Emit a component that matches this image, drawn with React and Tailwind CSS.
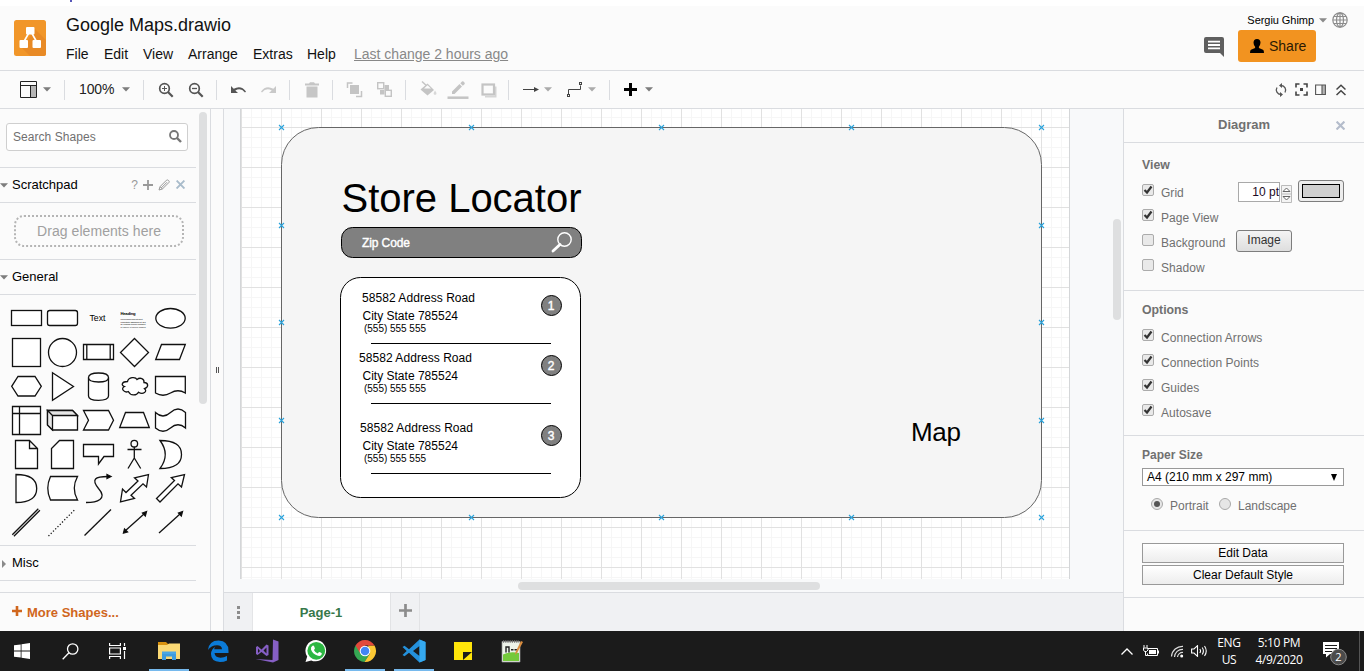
import React from "react";

/* ---------- small helpers ---------- */

function Caret({ className = "", color = "#7d7d7d" }) {
  return (
    <svg className={"block shrink-0 " + className} width="8" height="5" viewBox="0 0 8 5">
      <path d="M0 0.3H8L4 4.6Z" fill={color} />
    </svg>
  );
}

function Group({ className = "", children }) {
  return <div className={"flex h-5 shrink-0 items-center border-r border-[#dadce0] " + className}>{children}</div>;
}

function Tool({ children, className = "" }) {
  return (
    <svg className={"block h-5 w-[30px] shrink-0 " + className} viewBox="0 0 30 20" fill="none">
      {children}
    </svg>
  );
}

/* ---------- header ---------- */

function Header() {
  return (
    <header className="flex h-[65px] shrink-0 border-b border-[#dadce0] bg-[#fbfbfb]">
      <svg className="ml-[14px] mt-[14px] block h-9 w-8 shrink-0" viewBox="0 0 32 36">
        <rect width="32" height="36" rx="2.5" fill="#f19629" />
        <path d="M20 8L32 20V33.5Q32 36 29.500 36H16L7 27L14 20Z" fill="#e88a26" />
        <path d="M14.500 13.500L10 21.500M18 13.500L22.500 21.500" stroke="#fff" strokeWidth="1.600" />
        <rect x="12" y="7" width="8.500" height="7.500" rx="1" fill="#fff" />
        <rect x="5.500" y="20" width="8.500" height="8" rx="1" fill="#fff" />
        <rect x="18.500" y="20" width="8.500" height="8" rx="1" fill="#fff" />
      </svg>
      <div className="ml-5 flex flex-col">
        <div className="mt-[7px] text-[18px] leading-6 text-[#111]">Google Maps.drawio</div>
        <nav className="mt-[7px] flex text-[14px] leading-5 text-[#111]">
          <span className="w-[38px]">File</span>
          <span className="w-[39px]">Edit</span>
          <span className="w-[45px]">View</span>
          <span className="w-[65px]">Arrange</span>
          <span className="w-[54px]">Extras</span>
          <span className="w-[47px]">Help</span>
          <span className="text-[#888] underline">Last change 2 hours ago</span>
        </nav>
      </div>
      <div className="ml-auto flex flex-col">
        <div className="mt-[5px] flex h-[18px] items-center pr-4 text-[11px] text-black">
          <span className="ml-auto tracking-[-0.05px]">Sergiu Ghimp</span>
          <Caret className="ml-[5px]" color="#8a8a8a" />
          <svg className="ml-[5px] block h-4 w-4" viewBox="0 0 16 16" fill="none" stroke="#8c8c8c" strokeWidth="1.200">
            <circle cx="8" cy="8" r="7.200" />
            <ellipse cx="8" cy="8" rx="3.500" ry="7.200" />
            <path d="M8 1V15M1 8H15M2 4.500H14M2 11.500H14" />
          </svg>
        </div>
        <div className="mt-px flex items-center pr-12">
          <svg className="mt-[2px] block h-5 w-5" viewBox="0 0 20 20">
            <path d="M2 0H18Q20 0 20 2V20L16 16H2Q0 16 0 14V2Q0 0 2 0Z" fill="#5f5f5f" />
            <path d="M4 4.700H16M4 8H16M4 11.300H16" stroke="#fff" strokeWidth="1.800" />
          </svg>
          <button className="ml-[14px] flex h-8 w-[78px] items-center rounded-[3px] bg-[#f29320] pl-3 text-[14px] text-[#2a1a04]">
            <svg className="mr-[5px] block h-[14px] w-[14px]" viewBox="0 0 14 14">
              <path d="M7 0Q10.500 0 10.500 3.800Q10.300 6.500 8.900 7.700V9L13 10.800Q14 11.400 14 14H0Q0 11.400 1 10.800L5.100 9V7.700Q3.700 6.500 3.500 3.800Q3.500 0 7 0Z" fill="#000" />
            </svg>
            Share
          </button>
        </div>
      </div>
    </header>
  );
}

/* ---------- toolbar ---------- */

function Toolbar() {
  return (
    <div className="flex h-[38px] shrink-0 items-center border-b border-[#dadce0] bg-[#fbfbfb]">
      <Group className="w-[65px] pl-5">
        <svg className="block h-[17px] w-[17px]" viewBox="0 0 17 17">
          <rect x="10.500" y="5" width="6" height="11" fill="#b5b5b5" />
          <path d="M0.500 0.500H16.500V16.500H0.500ZM0.500 4.500H16.500M10.500 4.500V16.500" fill="none" stroke="#222" />
        </svg>
        <Caret className="ml-[6px]" />
      </Group>
      <Group className="w-[79px] pl-[14px] text-[14px] text-[#222]">
        <span className="w-9 tracking-[-0.1px]">100%</span>
        <Caret className="ml-[7px]" />
      </Group>
      <Group className="w-[73px] pl-[7px]">
        <Tool>
          <circle cx="13.500" cy="8.500" r="4.800" stroke="#555" strokeWidth="1.700" />
          <path d="M17 12L21.700 16.700" stroke="#555" strokeWidth="2.200" />
          <path d="M11 8.500H16M13.500 6V11" stroke="#555" />
        </Tool>
        <Tool>
          <circle cx="13.500" cy="8.500" r="4.800" stroke="#555" strokeWidth="1.700" />
          <path d="M17 12L21.700 16.700" stroke="#555" strokeWidth="2.200" />
          <path d="M11 8.500H16" stroke="#555" strokeWidth="1.300" />
        </Tool>
      </Group>
      <Group className="w-[73px] pl-[6px]">
        <Tool>
          <path d="M8 6V13H15L12.300 10.400Q18 7.500 22 12.500L23 11.500Q18 4.500 10.700 8.700Z" fill="#555" />
        </Tool>
        <Tool>
          <path d="M23 6V13H16L18.700 10.400Q13 7.500 9 12.500L8 11.500Q13 4.500 20.300 8.700Z" fill="#c9c9c9" />
        </Tool>
      </Group>
      <Group className="w-[43px] pl-[7px]">
        <Tool>
          <path d="M8 3.500H12L13 2.300H17L18 3.500H22V5.500H8ZM9.500 6.500H20.500V17.500H9.500Z" fill="#c6c6c6" />
        </Tool>
      </Group>
      <Group className="w-[73px] pl-[6px]">
        <Tool>
          <path d="M13.500 3H8.500V8M17 16.500H22.500V11" stroke="#c4c4c4" strokeWidth="1.500" />
          <rect x="11" y="5" width="9" height="9" fill="#c4c4c4" />
        </Tool>
        <Tool>
          <path d="M15.500 5H20V10H15.500V14.500H11V10H15.500Z" fill="#c4c4c4" />
          <rect x="8.700" y="2.700" width="6" height="6" fill="#fbfbfb" stroke="#c4c4c4" strokeWidth="1.400" />
          <rect x="16.300" y="10.300" width="6" height="6" fill="#fbfbfb" stroke="#c4c4c4" strokeWidth="1.400" />
        </Tool>
      </Group>
      <Group className="w-[103px] pl-[7px]">
        <Tool>
          <path d="M9 1.500L18 10" stroke="#c4c4c4" strokeWidth="1.400" />
          <path d="M14.500 3.500L21 10L14.500 15.500L7.500 9.500Z" fill="#c4c4c4" />
          <path d="M11 8.500L14.500 5.300L18 8.500Z" fill="#fbfbfb" />
          <path d="M22 10.500Q24 13 23.300 14.200Q22 15.500 20.800 14.200Q20.200 13 22 10.500Z" fill="#d8d8d8" />
        </Tool>
        <Tool>
          <path d="M4.500 17.700H25.500" stroke="#c4c4c4" strokeWidth="2.500" />
          <path d="M9 11.500L16.500 4L19 6.500L11.500 14H9ZM17.300 3.200L19 1.500Q20 0.900 21.300 2.200Q22.300 3.500 21.500 4.200L19.800 5.800Z" fill="#c4c4c4" />
        </Tool>
        <Tool>
          <path d="M22 6.500H23.500V17.500H12V16H22Z" fill="#d5d5d5" />
          <rect x="9.500" y="4.500" width="11.500" height="10" stroke="#c4c4c4" strokeWidth="2.200" />
        </Tool>
      </Group>
      <Group className="w-[101px] pl-[6px]">
        <Tool>
          <path d="M8 9.500H20" stroke="#444" />
          <path d="M19 7L24 9.500L19 12Z" fill="#444" />
        </Tool>
        <Caret color="#ababab" className="-ml-px" />
        <Tool className="ml-[7px]">
          <path d="M9.500 14V9.500H21.500V5.500" stroke="#444" />
          <rect x="8.500" y="14.500" width="2" height="2" stroke="#444" />
          <rect x="20.500" y="2.500" width="2" height="2" stroke="#444" />
        </Tool>
        <Caret color="#ababab" className="-ml-px" />
      </Group>
      <div className="flex h-5 items-center pl-[14px]">
        <svg className="block h-[13px] w-[13px]" viewBox="0 0 13 13">
          <path d="M6.500 0V13M0 6.500H13" stroke="#000" strokeWidth="3" />
        </svg>
        <Caret className="ml-2" />
      </div>
      <div className="ml-auto flex items-center gap-[7px] pr-[18px]">
        <svg className="block h-[14px] w-[14px]" viewBox="0 0 14 14" fill="none" stroke="#555" strokeWidth="1.300">
          <path d="M7 2.500A4.600 4.600 0 0 1 11 9.500M7 11.500A4.600 4.600 0 0 1 3 4.500" />
          <path d="M8 0L5 2.500L8 5ZM6 9L9 11.500L6 14Z" fill="#555" stroke="none" />
        </svg>
        <svg className="block h-[13px] w-[13px]" viewBox="0 0 13 13" fill="none" stroke="#444" strokeWidth="1.600">
          <path d="M1 4.500V1H4.500M8.500 1H12V4.500M12 8.500V12H8.500M4.500 12H1V8.500" />
          <rect x="5" y="5" width="3" height="3" fill="#444" stroke="none" />
        </svg>
        <svg className="block h-[13px] w-[11px]" viewBox="0 0 11 13">
          <rect x="7" y="2" width="3" height="9" fill="#b5b5b5" />
          <path d="M0.600 2H10.400V11.500H0.600ZM7 2V11.500" fill="none" stroke="#555" strokeWidth="1.100" />
        </svg>
        <svg className="ml-[3px] block h-[12px] w-[10px]" viewBox="0 0 10 12" fill="none" stroke="#444" strokeWidth="1.500">
          <path d="M0.500 5.500L5 1.200L9.500 5.500M0.500 11L5 6.700L9.500 11" />
        </svg>
      </div>
    </div>
  );
}

/* ---------- shape palette ---------- */

const SHAPES = [
  <rect x="3.5" y="9.500" width="30" height="15" />,
  <rect x="3.5" y="9.500" width="30" height="15" rx="2.200" />,
  <text x="9.500" y="20" fontSize="9" fill="#000" stroke="none" textLength="16" lengthAdjust="spacingAndGlyphs">Text</text>,
  <g stroke="none" fill="#000">
    <text x="4.500" y="14" fontSize="4.200" fontWeight="bold" textLength="15">Heading</text>
    <text x="4.500" y="19" fontSize="2" textLength="22">Lorem ipsum dolor sit amet</text>
    <text x="4.500" y="21.500" fontSize="2" textLength="25">consectetur adipisicing elit, sed</text>
    <text x="4.500" y="24" fontSize="2" textLength="25">do eiusmod tempor incididunt</text>
    <text x="4.500" y="26.500" fontSize="2" textLength="25">ut labore et dolore magna</text>
  </g>,
  <ellipse cx="18.500" cy="17.300" rx="14.700" ry="9.800" />,
  <rect x="4.500" y="3.500" width="28" height="28" />,
  <circle cx="18.500" cy="17.500" r="14" />,
  <path d="M3.500 9.500H33.500V24.500H3.500ZM6.800 9.500V24.500M30.200 9.500V24.500" />,
  <path d="M18.500 3.500L32.500 17.500L18.500 31.500L4.500 17.500Z" />,
  <path d="M9.500 9.500H33.300L27.500 24.500H3.700Z" />,
  <path d="M10 7.500H27L33.300 17.300L27 27H10L3.700 17.300Z" />,
  <path d="M8.500 3.700L29.500 17.500L8.500 31.300Z" />,
  <path d="M8.500 8.500V27Q8.500 31.300 18.500 31.300T28.500 27V8.500Q28.500 4 18.500 4T8.500 8.500Q8.500 13 18.500 13T28.500 8.500" />,
  <path d="M11.500 12.500C6 12.500 4.500 16 8.500 17.500C4 19.500 8.500 24.300 12.300 22.500C14.500 27 20.500 27 22.500 23.200C27 26 32 22.500 28.500 19.700C33.500 17.500 32 13.500 28 13.500C28.500 9.500 24 8 21 10.500C19.500 7.500 12.500 8 11.500 12.500Z" />,
  <path d="M3.500 7.500H33.300V24Q26 19.500 18.500 24T3.500 24Z" />,
  <path d="M4.500 3.500H32.500V31.500H4.500ZM11.500 3.500V31.500M4.500 10.500H32.500" />,
  <g>
    <path d="M3.500 7.500H28.500L33.500 12.500V27H8.500L3.500 22Z" />
    <path d="M3.500 7.500L8.500 12.500V27L3.500 22ZM3.500 7.500H28.500L33.500 12.500H8.500Z" fill="#e6e6e6" />
  </g>,
  <path d="M3.500 7.500H28.500L33.500 17.300L28.500 27H3.500L8.500 17.300Z" />,
  <path d="M9.500 9.500H27.500L33.300 24.500H3.700Z" />,
  <path d="M3.500 9.500Q11 16.500 18.500 9.500T33.500 9.500V25Q26 18.500 18.500 25T3.500 25Z" />,
  <path d="M7.500 3.500H21.500L29.500 11.500V31.500H7.500ZM21.500 3.500V11.500H29.500" />,
  <path d="M15.500 3.500H29.500V31.500H7.500V11.500Z" />,
  <path d="M3.500 7.500H33.500V19.500H24L18.500 27V19.500H3.500Z" />,
  <g fill="none">
    <circle cx="18.300" cy="6.700" r="3.300" />
    <path d="M18.300 10V21M11.500 12.500H25.500M18.300 21L12 31.500M18.300 21L24.700 31.500" />
  </g>,
  <path d="M8 3.500Q29.500 3.500 29.500 17.500T8 31.500Q18.500 17.500 8 3.500Z" />,
  <path d="M8 3.500Q28.700 3.500 28.700 17.500T8 31.500Z" />,
  <path d="M6.500 5.500H33.500Q27 17.500 33.500 29H6.500Q1 17.500 6.500 5.500Z" />,
  <g fill="none">
    <path d="M6 31.500C17 31.500 28 28 18.500 17.500C11 8 15 5.500 28 5.500" />
    <path d="M27 3.500L31 5.500L27 7.500Z" fill="#000" />
  </g>,
  <path d="M32.500 3.500L30.500 16L27 12.800L15 24.300L18.500 27.500L4.500 31L6.500 18L10 21.500L22 10L18.500 6.800Z" />,
  <path d="M32.500 3.500L29.500 16L26 12.800L8 31L4.500 27.500L22.500 9.500L19.300 6.500Z" />,
  <path d="M4.300 29.800L30.300 3.800M5.900 31.300L31.900 5.300" />,
  <path d="M4.500 31L31 4.500" strokeDasharray="1.2 2" />,
  <path d="M4.500 30.500L31 4.500" />,
  <g>
    <path d="M9 26L28 9" />
    <path d="M30.500 6.500L26.500 8L29.300 11ZM7.500 28L8.500 24L11.500 27Z" fill="#000" />
  </g>,
  <g>
    <path d="M7 28L28 9" />
    <path d="M30.500 6.500L26.500 8L29.300 11Z" fill="#000" />
  </g>,
];

function Section({ open = true, label, children }) {
  return (
    <div className="flex h-[34px] w-[195px] shrink-0 items-center pb-px text-black">
      {open ? (
        <Caret className="mt-[2px]" />
      ) : (
        <svg className="ml-[2px] mr-[2px] mt-[2px] block h-2 w-1" viewBox="0 0 4 8">
          <path d="M0 0L4 4L0 8Z" fill="#8a8a8a" />
        </svg>
      )}
      <span className="ml-1 text-[13px] leading-4">{label}</span>
      {children}
    </div>
  );
}

function Sidebar() {
  return (
    <aside className="flex w-[211px] shrink-0 flex-col border-r border-[#dadce0] bg-[#fbfbfb]">
      <div className="flex h-[483px] shrink-0">
        <div className="flex w-[196px] flex-col">
          <div className="h-[59px] border-b border-[#dadce0] pl-[6px] pt-[14px]">
            <div className="flex h-7 w-[182px] items-center rounded-[3px] border border-[#cfcfcf] bg-white pl-[6px] text-[12px] tracking-[0.05px] text-[#707070]">
              Search Shapes
              <svg className="mb-[2px] ml-auto mr-[5px] block h-[13px] w-[13px]" viewBox="0 0 13 13" fill="none" stroke="#777">
                <circle cx="5" cy="5" r="4" strokeWidth="1.800" />
                <path d="M8 8L12 12" strokeWidth="2.400" />
              </svg>
            </div>
          </div>
          <div className="flex h-[35px] border-b border-[#dadce0]">
            <Section label="Scratchpad">
              <span className="ml-auto text-[12px] text-[#999]">?</span>
              <svg className="ml-[5px] block h-[10px] w-[10px]" viewBox="0 0 10 10">
                <path d="M5 0V10M0 5H10" stroke="#999" strokeWidth="1.800" />
              </svg>
              <svg className="ml-[5px] block h-3 w-3" viewBox="0 0 12 12" fill="none" stroke="#999">
                <path d="M1 11L2 7.700L8.500 1.200Q9.500 0.500 10.600 1.500T10.900 3.500L4.400 10ZM3.200 9L9 3.200M2 7.700L4.400 10" />
              </svg>
              <svg className="ml-[6px] mr-[10px] block h-[9px] w-[9px]" viewBox="0 0 8 8">
                <path d="M0.500 0.500L7.500 7.500M7.500 0.500L0.500 7.500" stroke="#a9bccb" strokeWidth="1.700" />
              </svg>
            </Section>
          </div>
          <div className="h-[57px] border-b border-[#dadce0] pl-[14px] pt-3">
            <svg className="block h-8 w-[170px]" viewBox="0 0 170 32">
              <rect x="1" y="1" width="168" height="30" rx="9" fill="none" stroke="#b5b5b5" strokeWidth="2" strokeDasharray="2 2" />
              <text x="23" y="21" fontSize="14" fill="#a0a0a0" textLength="124">Drag elements here</text>
            </svg>
          </div>
          <div className="flex h-[35px] border-b border-[#dadce0]">
            <Section label="General" />
          </div>
          <div className="h-[251px] border-b border-[#dadce0] pl-2 pt-[6px]">
            <div className="grid w-[180px] grid-cols-5">
              {SHAPES.map((shape, i) => (
                <svg key={i} className="block h-[34px] w-9" viewBox="0 0 36 34" fill="#fff" stroke="#111" strokeWidth="1.300">
                  {shape}
                </svg>
              ))}
            </div>
          </div>
          <div className="flex h-[35px] border-b border-[#dadce0]">
            <Section open={false} label="Misc" />
          </div>
        </div>
        <div className="ml-[3px] mt-[3px] h-[292px] w-2 rounded-full bg-[#dedfe0]" />
      </div>
      <div className="flex flex-1 items-center border-t border-[#dadce0] pl-3 pt-[2px] text-[13px] font-bold text-[#d0661d]">
        <svg className="mb-1 mr-[5px] block h-[10px] w-[10px]" viewBox="0 0 10 10">
          <path d="M5 0V10M0 5H10" stroke="#d0661d" strokeWidth="2.600" />
        </svg>
        More Shapes...
      </div>
    </aside>
  );
}

/* ---------- diagram ---------- */

const STORES = [
  { n: 1, x: 122, y: 188, w: 113 },
  { n: 2, x: 119, y: 248, w: 113 },
  { n: 3, x: 120, y: 318, w: 113 },
];

const ANCHORS = [
  [41, 18], [231, 18], [421, 18], [611, 18], [801, 18],
  [41, 116], [801, 116], [41, 213], [801, 213], [41, 311], [801, 311],
  [41, 408], [231, 408], [421, 408], [611, 408], [801, 408],
];

function Diagram() {
  return (
    <svg className="block h-[470px] w-[830px]" viewBox="0 0 830 470">
      <defs>
        <pattern id="grid" x="1" y="18" width="40" height="40" patternUnits="userSpaceOnUse">
          <path d="M10.500 0V40M20.500 0V40M30.500 0V40M0 10.500H40M0 20.500H40M0 30.500H40" stroke="#f6f6f6" />
          <path d="M0.500 0V40M0 0.500H40" stroke="#e1e1e1" />
        </pattern>
      </defs>
      <rect width="830" height="470" fill="#fff" />
      <rect width="830" height="470" fill="url(#grid)" />
      <path d="M0.500 0V470M829.500 0V470" stroke="#d4d6d8" />
      <rect x="41.500" y="18.500" width="760" height="390" rx="37" fill="#f5f5f5" stroke="#666" />
      <text x="101.500" y="103" fontSize="40" textLength="240">Store Locator</text>
      <rect x="101.500" y="118.500" width="240" height="30" rx="11" fill="#808080" stroke="#000" />
      <text x="122" y="138" fontSize="12" fill="#fff" stroke="#fff" strokeWidth="0.400" textLength="48">Zip Code</text>
      <circle cx="324.500" cy="130.500" r="6.700" fill="none" stroke="#fff" strokeWidth="1.400" />
      <path d="M320 135.500L313 142" stroke="#fff" strokeWidth="2.800" strokeLinecap="round" />
      <rect x="100.500" y="168.500" width="240" height="220" rx="20" fill="#fff" stroke="#000" />
      {STORES.map((s) => (
        <g key={s.n}>
          <text x={s.x} y={s.y + 5} fontSize="12" textLength={s.w}>58582 Address Road</text>
          <text x="122.500" y={s.y + 23} fontSize="12" textLength="95.500">City State 785524</text>
          <text x="124" y={s.y + 35} fontSize="10" textLength="62">(555) 555 555</text>
          <path d={`M131 ${s.y + 46.5}H311`} stroke="#000" />
          <circle cx="311.500" cy={s.y + 8.5} r="10" fill="#808080" stroke="#000" />
          <text x="311" y={s.y + 13} fontSize="12" fill="#fff" stroke="#fff" strokeWidth="0.400" textAnchor="middle">{s.n}</text>
        </g>
      ))}
      <text x="671" y="332" fontSize="26" textLength="50">Map</text>
      {ANCHORS.map(([x, y]) => (
        <path key={x + "-" + y} d={`M${x - 2} ${y - 2}L${x + 3} ${y + 3}M${x + 3} ${y - 2}L${x - 2} ${y + 3}`} stroke="#29a3dc" strokeWidth="1.100" />
      ))}
    </svg>
  );
}

function Canvas() {
  return (
    <main className="flex min-w-0 flex-1 flex-col bg-[#f8f9fa]">
      <div className="flex h-[470px] shrink-0 pl-4">
        <Diagram />
        <div className="ml-auto mr-[2px] mt-[110px] h-[101px] w-2 rounded-full bg-[#dedfe0]" />
      </div>
      <div className="h-[13px] shrink-0 pl-[294px] pt-[3px]">
        <div className="h-2 w-[302px] rounded-full bg-[#dedfe0]" />
      </div>
      <div className="flex flex-1 border-t border-[#dadce0] bg-[#f0f1f3]">
        <div className="flex w-[29px] flex-col items-center justify-center gap-[2px] border-r border-[#e4e5e7]">
          <i className="h-[3px] w-[3px] bg-[#8c8c8c]" />
          <i className="h-[3px] w-[3px] bg-[#8c8c8c]" />
          <i className="h-[3px] w-[3px] bg-[#8c8c8c]" />
        </div>
        <div className="flex w-[137px] items-center justify-center bg-white pt-px text-[13px] font-bold text-[#37784a]">
          <span className="-ml-px">Page-1</span>
        </div>
        <div className="flex w-[30px] justify-center border-x border-[#e2e3e5] pt-[11px]">
          <svg className="block h-[13px] w-[13px]" viewBox="0 0 13 13">
            <path d="M6.500 0V13M0 6.500H13" stroke="#8c8c8c" strokeWidth="2.700" />
          </svg>
        </div>
      </div>
    </main>
  );
}

/* ---------- format panel ---------- */

function Check({ on, label, children }) {
  return (
    <div className="flex h-[25px] items-center">
      <svg className="mb-[5px] block h-3 w-3" viewBox="0 0 12 12">
        <rect x="0.500" y="0.500" width="11" height="11" rx="1.500" fill="#e9e9e9" stroke="#ababab" />
        {on && <path d="M2.500 6L5 8.500L9.500 2.500" fill="none" stroke="#333" strokeWidth="2.200" />}
      </svg>
      <span className="ml-[7px] tracking-[0.04px]">{label}</span>
      {children}
    </div>
  );
}

function Radio({ on }) {
  return (
    <svg className="mb-[5px] block h-3 w-3" viewBox="0 0 12 12">
      <circle cx="6" cy="6" r="5.500" fill="#e6e6e6" stroke="#a8a8a8" />
      {on && <circle cx="6" cy="6" r="3" fill="#555" />}
    </svg>
  );
}

function FormatPanel() {
  return (
    <aside className="flex w-[241px] shrink-0 flex-col border-l border-[#dadce0] bg-[#fbfbfb] text-[12px] text-[#707070]">
      <div className="flex h-[34px] shrink-0 items-center border-b border-[#dadce0] pb-px text-[13px] font-bold">
        <span className="ml-[94px]">Diagram</span>
        <svg className="ml-auto mr-[19px] block h-[9px] w-[9px]" viewBox="0 0 8 8">
          <path d="M0.500 0.500L7.500 7.500M7.500 0.500L0.500 7.500" stroke="#b4bccb" strokeWidth="1.900" />
        </svg>
      </div>
      <section className="h-[148px] shrink-0 border-b border-[#dadce0] pl-[18px] pt-[14px]">
        <h3 className="mb-[7px] text-[12.3px] font-bold leading-4">View</h3>
        <Check on label="Grid">
          <div className="-mt-[2px] ml-auto mr-5 flex items-center">
            <div className="flex h-5 w-[42px] items-center justify-end border border-[#a9a9a9] bg-white text-[12px] text-[#1c0a24]">10 pt</div>
            <svg className="ml-[1px] mt-1 block h-[18px] w-[11px]" viewBox="0 0 11 18">
              <path d="M0.500 0.500H10.500V17.500H0.500ZM0.500 9H10.500" fill="#f4f4f4" stroke="#bbb" />
              <path d="M2 6.500H9L5.500 3ZM2 11.500H9L5.500 15Z" fill="#fff" stroke="#666" />
            </svg>
            <div className="-mt-[1px] ml-[6px] flex h-[22px] w-[46px] items-center justify-center rounded-[3px] border border-[#7d7d7d] bg-[#ededed]">
              <div className="h-[14px] w-[38px] border border-black bg-[#d0d0d0]" />
            </div>
          </div>
        </Check>
        <Check on label="Page View" />
        <Check label="Background">
          <div className="-mt-1 ml-auto mr-[72px] flex h-[22px] w-[56px] items-center justify-center rounded-[3px] border border-[#7d7d7d] bg-linear-to-b from-[#f4f4f4] to-[#dedede] pb-[2px] text-[#333]">Image</div>
        </Check>
        <Check label="Shadow" />
      </section>
      <section className="h-[145px] shrink-0 border-b border-[#dadce0] pl-[18px] pt-[11px]">
        <h3 className="mb-[7px] text-[12.300px] font-bold leading-4">Options</h3>
        <Check on label="Connection Arrows" />
        <Check on label="Connection Points" />
        <Check on label="Guides" />
        <Check on label="Autosave" />
      </section>
      <section className="h-[95px] shrink-0 border-b border-[#dadce0] pl-[18px] pt-[11px]">
        <h3 className="text-[12px] font-bold leading-4">Paper Size</h3>
        <div className="mt-[5px] flex h-[18px] w-[202px] items-center border border-[#999] bg-white pl-1 text-black">
          A4 (210 mm x 297 mm)
          <svg className="ml-auto mr-[6px] block h-[7px] w-[6px]" viewBox="0 0 6 7">
            <path d="M0 0H6L3 7Z" fill="#000" />
          </svg>
        </div>
        <div className="mt-2 flex h-6 items-center pl-[9px]">
          <Radio on />
          <span className="ml-[7px] w-[49px]">Portrait</span>
          <Radio />
          <span className="ml-[7px]">Landscape</span>
        </div>
      </section>
      <section className="flex h-[67px] shrink-0 flex-col gap-[2px] border-b border-[#dadce0] pl-[18px] pt-3 text-black">
        <div className="flex h-5 w-[202px] items-center justify-center border border-[#999] bg-linear-to-b from-white to-[#ededed]">Edit Data</div>
        <div className="flex h-5 w-[202px] items-center justify-center border border-[#999] bg-linear-to-b from-white to-[#ededed]">Clear Default Style</div>
      </section>
    </aside>
  );
}

/* ---------- taskbar ---------- */

function TaskIcon({ active, children }) {
  return (
    <div className="flex h-10 w-[49px] shrink-0 justify-center">
      <div className={"flex h-10 w-10 items-center justify-center border-b-2 pt-[2px] " + (active ? "border-[#76b9ed]" : "border-transparent")}>
        <svg className="block h-6 w-6" viewBox="0 0 24 24">{children}</svg>
      </div>
    </div>
  );
}

function Taskbar() {
  return (
    <footer className="flex h-10 shrink-0 items-center bg-[#1b1b1b] text-white">
      <div className="flex w-[46px] justify-center">
        <svg className="ml-[-2px] block h-4 w-4" viewBox="0 0 16 16" fill="#fff">
          <path d="M0 2.300L6.700 1.400V7.600H0ZM7.500 1.300L16 0V7.600H7.500ZM0 8.400H6.700V14.600L0 13.700ZM7.500 8.400H16V16L7.500 14.700Z" />
        </svg>
      </div>
      <div className="flex w-12 justify-center">
        <svg className="block h-[17px] w-[17px]" viewBox="0 0 17 17" fill="none" stroke="#fff" strokeWidth="1.300">
          <circle cx="10.700" cy="6" r="5.200" />
          <path d="M7 9.800L0.700 16.200" />
        </svg>
      </div>
      <div className="flex w-12 justify-center">
        <svg className="-ml-px block h-4 w-[17px]" viewBox="0 0 17 16" fill="none" stroke="#fff" strokeWidth="1.200">
          <path d="M0.600 0V2.500H11.400V0M0.600 16V13.500H11.400V16M0.600 5H11.400V11H0.600ZM15.500 0V3M15.500 8V16" />
          <rect x="14" y="4" width="3" height="3" fill="#fff" stroke="none" />
        </svg>
      </div>
      <div className="ml-[2px] flex">
        <TaskIcon active>
          <path d="M1 3H9L11 5H22V20H1Z" fill="#d9920f" />
          <path d="M1 6H10L12 4.500H23V20H1Z" fill="#fbd974" />
          <path d="M5 14H19V21H15V17.500H9V21H5Z" fill="#3f9bdc" />
          <path d="M5 12.500H19V15H5Z" fill="#4aa6e4" />
        </TaskIcon>
        <TaskIcon>
          <path d="M2 11Q3 1.500 12.500 1.500Q22.500 2 22.500 12V14H8.500Q9 18.500 14.500 18.700Q18 18.700 21 17V21.500Q18 23 14 23Q5 22.500 5 15Q5.200 10 9.500 7.500Q8.300 8.500 8.200 10.300H16Q15.800 6.300 11 6.300Q5 6.300 2 11Z" fill="#0b7bd8" />
        </TaskIcon>
        <TaskIcon>
          <path d="M18 0.500L23.500 2.500V21L18 23.500L0.500 20L17.500 21Z" fill="#865fc5" />
          <path d="M1 8L2.500 7L6.500 10.500L11.500 5.500L13.500 6.500V16L11.500 17L6.500 13L2.500 16L1 15ZM3 9.500V14L5 12ZM8.500 11.500L11.500 14.500V8.500Z" fill="#865fc5" fillRule="evenodd" />
        </TaskIcon>
        <TaskIcon>
          <path d="M12.300 1A10.700 10.700 0 1 1 7.200 21.500L1.500 23L3.200 17.500A10.700 10.700 0 0 1 12.300 1Z" fill="#fff" />
          <circle cx="12.300" cy="11.800" r="8.900" fill="#2cb742" />
          <path d="M8.500 6.700Q9.500 6.300 10 7L10.900 9.200Q11 9.800 9.900 10.900Q11.200 13.500 13.700 14.500L15 13.100Q15.400 12.800 17.500 14Q18.200 14.500 17.300 16Q15.800 17.500 13.200 16.500Q8.500 14.800 7 10.500Q6.500 8 8.500 6.700Z" fill="#fff" />
        </TaskIcon>
        <TaskIcon active>
          <path d="M12 12L2.500 6.500A11 11 0 0 0 11.500 23L16.800 14.700Z" fill="#35a853" />
          <path d="M21.500 6.500A11 11 0 0 1 11.500 23L16.800 14.700L15 6.500Z" fill="#fcc934" />
          <path d="M2.500 6.500A11 11 0 0 1 21.500 6.500H12L7 14Z" fill="#e2493b" />
          <circle cx="12" cy="12" r="5.300" fill="#fff" />
          <circle cx="12" cy="12" r="4.300" fill="#4285f4" />
        </TaskIcon>
        <TaskIcon active>
          <path d="M17.500 0.500L23.500 3V21L17.500 23.500L7 13.700L2.500 17.200L0.500 16L4.700 12L0.500 8L2.500 6.800L7 10.300ZM17.500 7L11 12L17.500 17Z" fill="#2491dc" fillRule="evenodd" />
          <path d="M17.500 0.500L23.500 3V21L17.500 23.500Z" fill="#35a9f0" />
        </TaskIcon>
        <TaskIcon>
          <path d="M3 3H21V21H3Z" fill="#ffe50a" />
          <path d="M12 21V13H21Z" fill="#1b1b1b" />
        </TaskIcon>
        <TaskIcon>
          <path d="M2 2.500H20V23H2Z" fill="#eef3ea" stroke="#999" strokeWidth="0.700" />
          <path d="M3 15.500Q10 12 19 14V22H3Z" fill="#74c93b" />
          <path d="M3 2.500H19" stroke="#777" strokeWidth="2.500" strokeDasharray="1.200 1" />
          <path d="M6 13.500V8H9V13.500M11 10.700H13.500M14.500 10.700H17" fill="none" stroke="#222" strokeWidth="1.400" />
          <path d="M21 2L23 3L17 14L15 16L15.500 13Z" fill="#d98c3e" />
        </TaskIcon>
      </div>
      <div className="ml-auto flex h-10 items-center font-['Open_Sans','Noto_Sans',sans-serif] text-[12px]">
        <svg className="block h-[7px] w-3" viewBox="0 0 12 7" fill="none" stroke="#fff" strokeWidth="1.300">
          <path d="M0.500 6.500L6 1L11.500 6.500" />
        </svg>
        <svg className="ml-[10px] block h-3 w-4" viewBox="0 0 16 12" fill="none" stroke="#fff">
          <path d="M4.500 3.500H14.500V10.500H4.500V8.500M15.500 5.500V8.500" />
          <rect x="6" y="5" width="7" height="4" fill="#fff" stroke="none" />
          <path d="M1 0V2.500M4 0V2.500M0 3H5V5L3.500 6.500H1.500L0.500 5V3M2.500 6.500V10.500H4.500" />
        </svg>
        <svg className="ml-[11px] block h-[14px] w-[14px]" viewBox="0 0 14 14" fill="none" stroke="#ddd" strokeWidth="1.200">
          <path d="M1.500 12.500A11 11 0 0 1 13 2.300M4.500 13A8 8 0 0 1 13 5.300M7.500 13A5 5 0 0 1 13 8.500" />
          <circle cx="11.700" cy="12" r="1.500" fill="#fff" stroke="none" />
        </svg>
        <svg className="ml-[7px] block h-3 w-[17px]" viewBox="0 0 17 12" fill="none" stroke="#fff" strokeWidth="1.100">
          <path d="M0.600 4V8H3L6.500 11.300V0.700L3 4ZM8.800 4Q10.300 6 8.800 8M11.200 2.500Q13.600 6 11.200 9.500M13.500 1Q17 6 13.500 11" />
        </svg>
        <div className="ml-2 flex w-[26px] flex-col items-center leading-[17px] tracking-[-0.3px]">
          <span>ENG</span>
          <span>US</span>
        </div>
        <div className="ml-[12px] flex w-[50px] flex-col items-center whitespace-nowrap pb-px leading-[17px] tracking-[-0.35px]">
          <span>5:10 PM</span>
          <span>4/9/2020</span>
        </div>
        <svg className="ml-[18px] mt-[3px] block h-[26px] w-[26px]" viewBox="0 0 26 26">
          <path d="M1 2H17V14H8L4 17.500V14H1Z" fill="#fff" />
          <path d="M3 5.500H15M3 8.500H15M3 11.500H10" stroke="#1b1b1b" />
          <circle cx="16.500" cy="17" r="7.800" fill="#4b4b4b" stroke="#8a8a8a" />
          <text x="16.500" y="21" fontSize="11" fill="#fff" textAnchor="middle">2</text>
        </svg>
        <div className="ml-[11px] mr-1 h-10 w-px bg-[#555]" />
      </div>
    </footer>
  );
}

export default function App() {
  return (
    <div className="flex h-[671px] w-[1364px] flex-col overflow-hidden bg-white font-['Liberation_Sans',Arial,sans-serif]">
      <div className="h-[6px] shrink-0 pl-[70px]">
        <div className="h-[2px] w-[2px] bg-[#5757b8]" />
      </div>
      <Header />
      <Toolbar />
      <div className="flex h-[522px] shrink-0">
        <Sidebar />
        <div className="flex w-[13px] shrink-0 items-center justify-center gap-[1px] border-r border-[#dadce0] bg-[#fbfbfb]">
          <i className="h-[6px] w-px bg-[#555]" />
          <i className="h-[6px] w-px bg-[#555]" />
        </div>
        <Canvas />
        <FormatPanel />
      </div>
      <Taskbar />
    </div>
  );
}
